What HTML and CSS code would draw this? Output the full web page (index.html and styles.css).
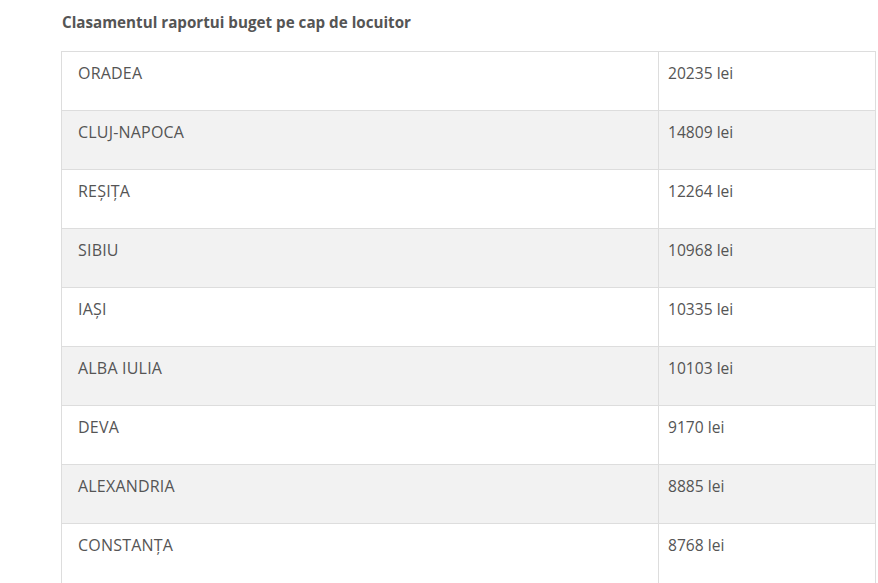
FILE: index.html
```html
<!DOCTYPE html>
<html lang="ro">
<head>
<meta charset="utf-8">
<link rel="stylesheet" href="styles.css">
</head>
<body>
<div class="page">
  <h4 class="title">Clasamentul raportui buget pe cap de locuitor</h4>
  <table class="rank">
    <tbody>
      <tr><td class="city">ORADEA</td><td class="val">20235 lei</td></tr>
      <tr><td class="city">CLUJ-NAPOCA</td><td class="val">14809 lei</td></tr>
      <tr><td class="city">REȘIȚA</td><td class="val">12264 lei</td></tr>
      <tr><td class="city">SIBIU</td><td class="val">10968 lei</td></tr>
      <tr><td class="city">IAȘI</td><td class="val">10335 lei</td></tr>
      <tr><td class="city">ALBA IULIA</td><td class="val">10103 lei</td></tr>
      <tr><td class="city">DEVA</td><td class="val">9170 lei</td></tr>
      <tr><td class="city">ALEXANDRIA</td><td class="val">8885 lei</td></tr>
      <tr><td class="city">CONSTANȚA</td><td class="val">8768 lei</td></tr>
    </tbody>
  </table>
</div>
</body>
</html>
```
FILE: styles.css
```css
html, body {
  margin: 0;
  padding: 0;
  background: #fff;
}
.page {
  padding: 0 2px 0 61px;
  font-family: "Open Sans", "Liberation Sans", sans-serif;
  color: #555;
}
.title {
  margin: 0;
  padding-top: 12px;
  padding-left: 1px;
  height: 51px;
  box-sizing: border-box;
  font-size: 15.2px;
  font-weight: 700;
  line-height: 20px;
  color: #555;
}
.rank {
  width: 815px;
  border-collapse: collapse;
  border: 1px solid #ddd;
}
.rank tr {
  height: 59px;
}
.rank tr:last-child {
  height: 64px;
}
.rank tr:nth-child(even) td {
  background: #f2f2f2;
}
.rank td {
  border: 1px solid #ddd;
  vertical-align: top;
  font-size: 16px;
  line-height: 22px;
  padding: 10px 0 0 0;
}
.city {
  width: 580px;
  padding-left: 16px !important;
  letter-spacing: 0.2px;
}
.val {
  padding-left: 9px !important;
  font-size: 15.6px !important;
}
```
